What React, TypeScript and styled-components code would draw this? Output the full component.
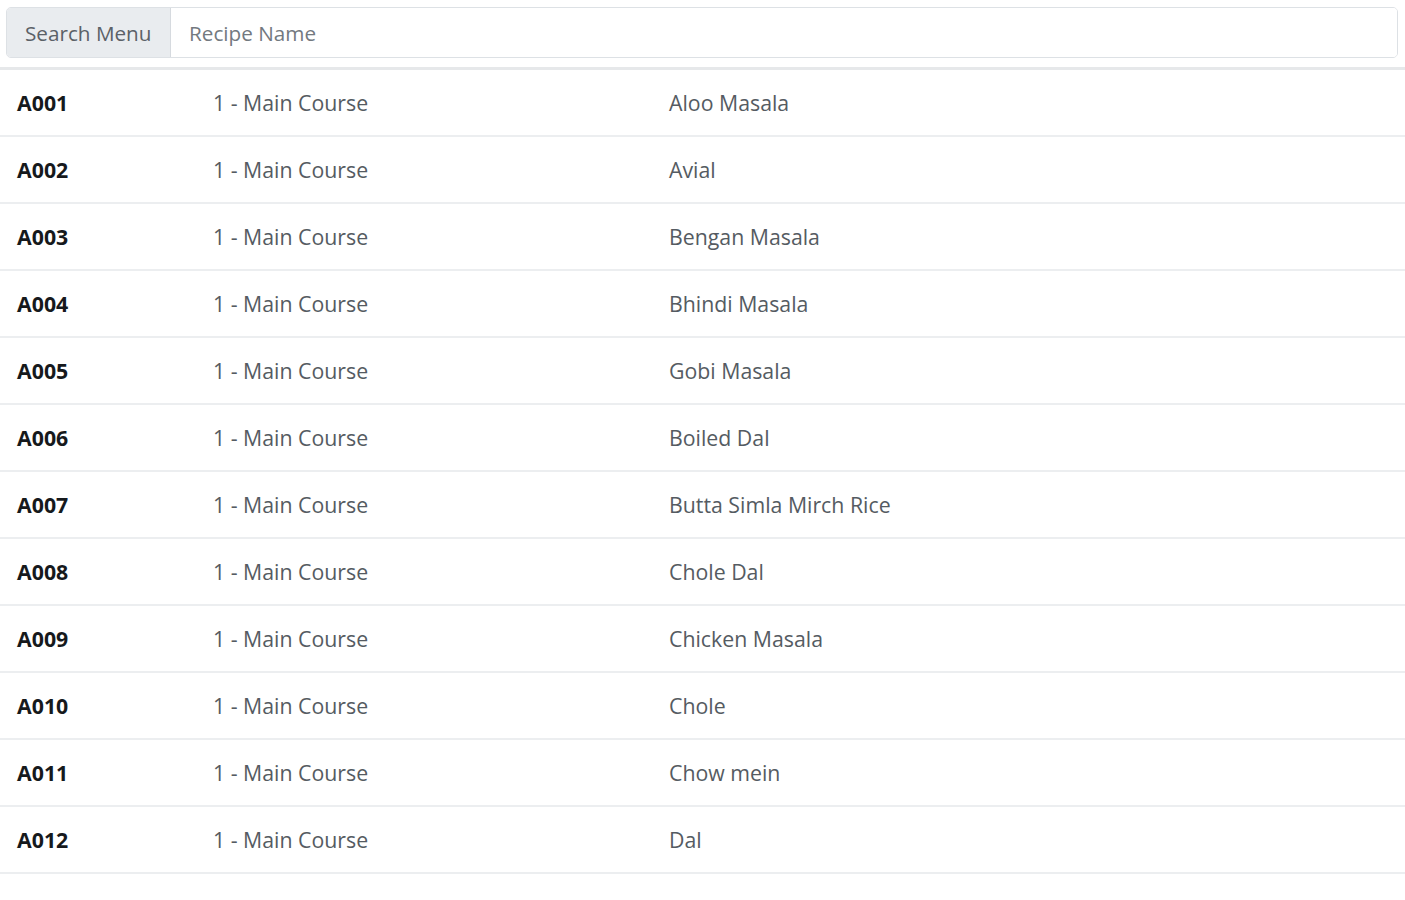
import React from 'react';
import styled, { createGlobalStyle } from 'styled-components';

const GlobalStyle = createGlobalStyle`
  html, body {
    margin: 0;
    padding: 0;
    background: #fff;
    font-family: "Open Sans", "Noto Sans", "Liberation Sans", sans-serif;
    color: #212529;
  }
`;

const Page = styled.div`
  display: flex;
  flex-direction: column;
  gap: 9px;
  padding-top: 7px;
`;

const InputGroup = styled.div`
  display: flex;
  margin: 0 7px 0 6px;
  height: 51px;
  border: 1px solid #dde1e5;
  border-radius: 5px;
  overflow: hidden;
  box-sizing: border-box;
`;

const Prepend = styled.span`
  display: flex;
  align-items: center;
  box-sizing: border-box;
  width: 164px;
  padding: 0 0 0 18px;
  background: #e9ecef;
  border-right: 1px solid #d6dadf;
  color: #5b6167;
  font-size: 20.7px;
  white-space: nowrap;
`;

const SearchInput = styled.input`
  flex: 1;
  border: none;
  outline: none;
  padding: 0 18px;
  font-family: inherit;
  font-size: 20.7px;
  color: #495057;
  background: #fff;

  &::placeholder {
    color: #73797f;
  }
`;

const Table = styled.table`
  width: 100%;
  border-collapse: collapse;
  border-top: 3px solid #e6e8ea;
`;

const Row = styled.tr`
  height: 67px;
  border-bottom: 2px solid #eceef0;
`;

const Cell = styled.td<{ $bold?: boolean; $width?: string }>`
  padding: 0 17px;
  font-size: 21.3px;
  font-weight: ${(p) => (p.$bold ? 700 : 400)};
  color: ${(p) => (p.$bold ? '#16191c' : '#555b62')};
  width: ${(p) => p.$width ?? 'auto'};
  vertical-align: middle;
  white-space: nowrap;
`;

const recipes = [
  'Aloo Masala',
  'Avial',
  'Bengan Masala',
  'Bhindi Masala',
  'Gobi Masala',
  'Boiled Dal',
  'Butta Simla Mirch Rice',
  'Chole Dal',
  'Chicken Masala',
  'Chole',
  'Chow mein',
  'Dal',
];

export default function App() {
  return (
    <>
      <GlobalStyle />
      <Page>
        <InputGroup>
          <Prepend>Search Menu</Prepend>
          <SearchInput placeholder="Recipe Name" />
        </InputGroup>
        <Table>
          <tbody>
            {recipes.map((name, i) => (
              <Row key={name}>
                <Cell $bold $width="162px">
                  A{String(i + 1).padStart(3, '0')}
                </Cell>
                <Cell $width="422px">1 - Main Course</Cell>
                <Cell>{name}</Cell>
              </Row>
            ))}
          </tbody>
        </Table>
      </Page>
    </>
  );
}
